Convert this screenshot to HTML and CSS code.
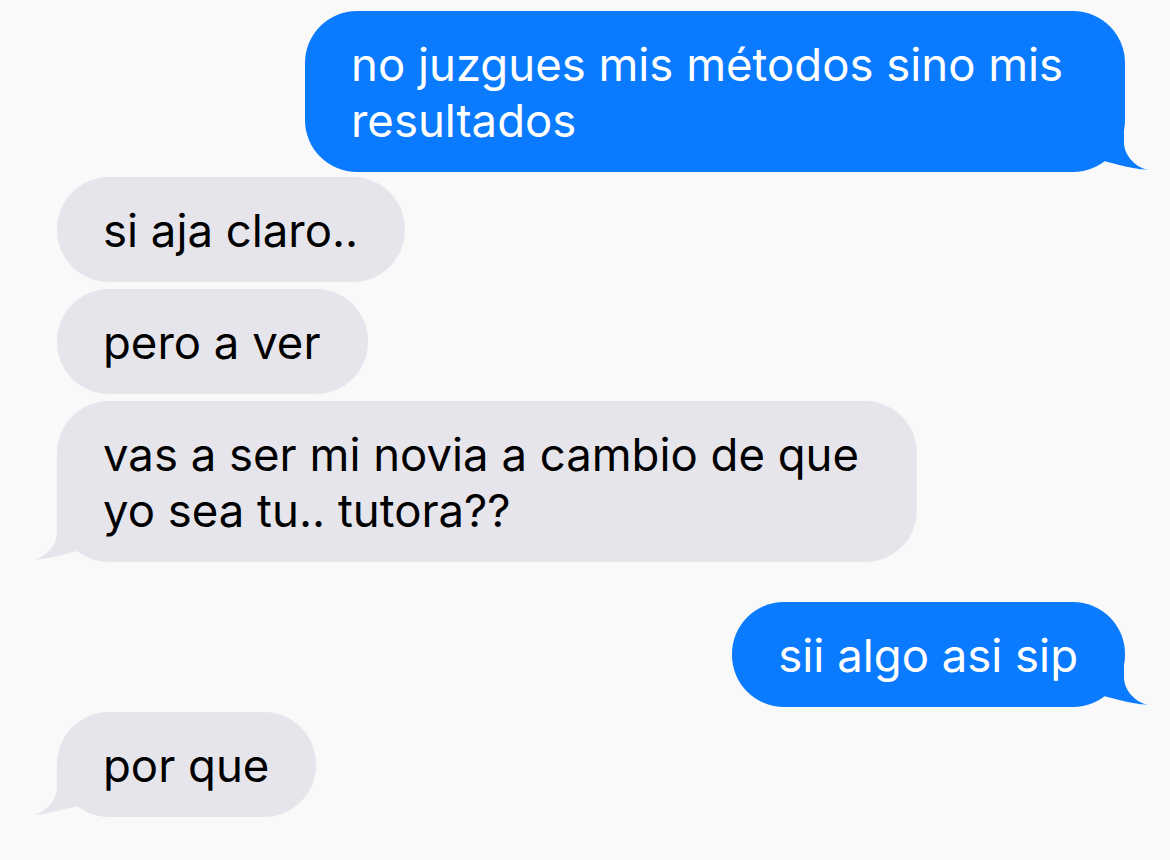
FILE: index.html
```html
<!DOCTYPE html>
<html lang="es">
<head>
<meta charset="utf-8">
<title>Mensajes</title>
<link rel="stylesheet" href="styles.css">
</head>
<body>
<main class="thread">
  <div class="msg sent wide first">
    <p>no juzgues mis métodos sino mis resultados</p>
    <svg class="tail" viewBox="0 0 60 50" width="60" height="50" aria-hidden="true"><path d="M0 0H35V20C35 32 44 44 59 48C50 47 40 46 15 39L0 30Z"/></svg>
  </div>
  <div class="msg recv gap-s">
    <p>si aja claro..</p>
  </div>
  <div class="msg recv gap-m">
    <p>pero a ver</p>
  </div>
  <div class="msg recv gap-m">
    <p>vas a ser mi novia a cambio de que yo sea tu.. tutora??</p>
    <svg class="tail" viewBox="0 0 60 50" width="60" height="50" aria-hidden="true"><path d="M0 0H35V20C35 32 44 44 59 48C50 47 40 46 15 39L0 30Z"/></svg>
  </div>
  <div class="msg sent gap-l">
    <p>sii algo asi sip</p>
    <svg class="tail" viewBox="0 0 60 50" width="60" height="50" aria-hidden="true"><path d="M0 0H35V20C35 32 44 44 59 48C50 47 40 46 15 39L0 30Z"/></svg>
  </div>
  <div class="msg recv gap-s">
    <p>por que</p>
    <svg class="tail" viewBox="0 0 60 50" width="60" height="50" aria-hidden="true"><path d="M0 0H35V20C35 32 44 44 59 48C50 47 40 46 15 39L0 30Z"/></svg>
  </div>
</main>
</body>
</html>
```
FILE: styles.css
```css
html, body {
  margin: 0;
  padding: 0;
  background: #f9f9f9;
}
body {
  width: 1170px;
  height: 860px;
  overflow: hidden;
  font-family: Inter, "Noto Sans", "Liberation Sans", sans-serif;
}
.thread {
  display: flex;
  flex-direction: column;
  padding: 11px 45px 0 57px;
}
.msg {
  position: relative;
  box-sizing: border-box;
  max-width: 860px;
  padding: 26px 47px 23px 46px;
  border-radius: 52px;
  font-size: 45.5px;
  line-height: 56px;
}
.msg p {
  margin: 0;
}
.msg.wide {
  max-width: 820px;
}
.sent {
  align-self: flex-end;
  background: #0a7bff;
  color: #ffffff;
  fill: #0a7bff;
}
.recv {
  align-self: flex-start;
  background: #e6e5eb;
  color: #000000;
  fill: #e6e5eb;
}
.gap-s { margin-top: 5px; }
.gap-m { margin-top: 7px; }
.gap-l { margin-top: 40px; }
.tail {
  position: absolute;
  bottom: 0;
  display: block;
}
.sent .tail {
  right: -24px;
}
.recv .tail {
  left: -25px;
  transform: scaleX(-1);
}
```
